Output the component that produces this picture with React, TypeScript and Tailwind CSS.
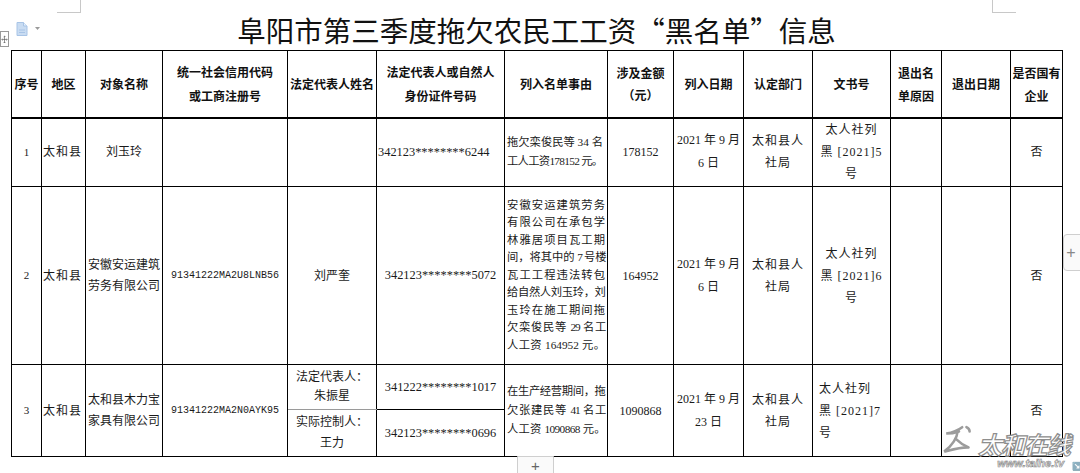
import React from "react";

const cell = "border border-black p-0 align-middle";
const body = "font-['Liberation_Serif','Noto_Sans_CJK_SC',serif] text-[12px]";

function Lines({ lines, className = "", lineClass = "" }: { lines: string[]; className?: string; lineClass?: string }) {
  return (
    <div className={className}>
      {lines.map((l, i) => (
        <div key={i} className={lineClass}>
          {l}
        </div>
      ))}
    </div>
  );
}

type RL = { t: string; c?: string; j?: boolean };

function Reason({ lines, lh = "leading-[17.5px]" }: { lines: RL[]; lh?: string }) {
  return (
    <div className={`px-[2px] text-[11.3px] ${lh}`}>
      {lines.map((l, i) => (
        <div key={i} className={`whitespace-nowrap ${l.j === false ? "" : "[text-align-last:justify]"} ${l.c ?? ""}`}>
          {l.t}
        </div>
      ))}
    </div>
  );
}

export default function App() {
  return (
    <div className="relative w-[1080px] h-[473px] overflow-hidden bg-white text-[#1a1a1a]">
      {/* page corner marks */}
      <div className="absolute left-[57px] top-0 w-[24px] h-[13px] border-r border-b border-[#c8c8c8]" />
      <div className="absolute left-[992px] top-0 w-[24px] h-[13px] border-l border-b border-[#c8c8c8]" />

      {/* move handle */}
      <div className="absolute left-0 top-[31px] w-[9px] h-[16px] border border-[#9a9a9a] bg-white flex items-center justify-center">
        <svg width="9" height="11" viewBox="0 0 9 11" fill="none" stroke="#555" strokeWidth="0.8">
          <path d="M4.5 1v9M1 5.5h7M3.3 2.2l1.2-1.2 1.2 1.2M3.3 8.8l1.2 1.2 1.2-1.2M2.2 4.3 1 5.5l1.2 1.2M6.8 4.3 8 5.5 6.8 6.7" />
        </svg>
      </div>
      {/* doc icon */}
      <svg className="absolute left-[16px] top-[22px]" width="12" height="14" viewBox="0 0 12 14">
        <path d="M1 0.5h6.5L11 4v9.5H1z" fill="#c9dcf2" stroke="#a8c4e6" />
        <path d="M7.5 0.5V4H11" fill="#e6f0fb" stroke="#a8c4e6" />
        <path d="M3 8h6M3 10.5h6" stroke="#a8c4e6" />
      </svg>
      <svg className="absolute left-[35px] top-[27px]" width="5" height="4" viewBox="0 0 5 4">
        <path d="M0 0h5L2.5 3z" fill="#9a9a9a" />
      </svg>

      {/* right tab */}
      <div className="absolute left-[1063px] top-[234px] w-[20px] h-[37px] rounded-l-[4px] border border-[#cfcfcf] bg-[#fafafa] flex items-center justify-center text-[#888] text-[16px] leading-none font-['Liberation_Sans',sans-serif] pr-[4px]">
        +
      </div>
      {/* bottom tab */}
      <div className="absolute left-[517px] top-[456px] w-[37px] h-[22px] rounded-b-[4px] border border-[#cfcfcf] bg-[#fafafa] flex items-start justify-center pt-[1px] text-[#666] text-[15px] leading-[16px] font-['Liberation_Sans',sans-serif]">
        +
      </div>

      {/* watermark */}
      <div className="absolute left-[940px] top-[424px] flex flex-col items-end">
        <div className="flex items-end">
          <svg width="38" height="34" viewBox="0 0 34 32" fill="none" stroke="#9c9c9c" strokeWidth="2.4" strokeLinecap="round">
            <path d="M20 3c-4 3-9 5-15 6 5 0 9-1 12-2M16 6c-1 8-5 14-13 20 8-2 15-4 22-4" />
            <path d="M14 14c3 3 7 6 12 8" />
            <path d="M24 3c2 1 3 2 3 4" />
          </svg>
          <span className="font-['Noto_Sans_CJK_SC',sans-serif] font-bold italic text-[24px] leading-[28px] text-white [-webkit-text-stroke:1.2px_#8e8e8e] tracking-[-1px]">
            太和在线
          </span>
        </div>
        <span className="font-['Liberation_Sans',sans-serif] font-bold italic text-[11px] leading-[11px] text-white [-webkit-text-stroke:0.7px_#8e8e8e] pr-[6px]">
          www.taihe.tv
        </span>
      </div>
      <div className="absolute left-[1072px] top-[462px] text-[8px] text-[#888] leading-none">↘</div>

      <div className="ml-[11px] w-[1051px]">
        <div className="h-[50px] pt-[15px] text-center text-[28.5px] leading-[30px] font-['Noto_Sans_CJK_SC',sans-serif] text-[#111]">
          阜阳市第三季度拖欠农民工工资“黑名单”信息
        </div>
        <table className="table-fixed border-collapse w-[1051px]">
          <colgroup>
            <col className="w-[30px]" />
            <col className="w-[44px]" />
            <col className="w-[77px]" />
            <col className="w-[125px]" />
            <col className="w-[89px]" />
            <col className="w-[128px]" />
            <col className="w-[103px]" />
            <col className="w-[66px]" />
            <col className="w-[70px]" />
            <col className="w-[69px]" />
            <col className="w-[78px]" />
            <col className="w-[51px]" />
            <col className="w-[69px]" />
            <col className="w-[52px]" />
          </colgroup>
          <thead>
            <tr className="h-[67px] font-['Noto_Sans_CJK_SC',sans-serif] font-bold text-[12px] leading-[24px] text-[#111]">
              <th className={`${cell} border-b-2`}>序号</th>
              <th className={`${cell} border-b-2`}>地区</th>
              <th className={`${cell} border-b-2`}>对象名称</th>
              <th className={`${cell} border-b-2`}>
                统一社会信用代码
                <br />
                或工商注册号
              </th>
              <th className={`${cell} border-b-2 whitespace-nowrap`}>法定代表人姓名</th>
              <th className={`${cell} border-b-2`}>
                法定代表人或自然人
                <br />
                身份证件号码
              </th>
              <th className={`${cell} border-b-2`}>列入名单事由</th>
              <th className={`${cell} border-b-2 leading-[22px]`}>
                涉及金额
                <br />
                （元）
              </th>
              <th className={`${cell} border-b-2`}>列入日期</th>
              <th className={`${cell} border-b-2`}>认定部门</th>
              <th className={`${cell} border-b-2`}>文书号</th>
              <th className={`${cell} border-b-2 leading-[23px]`}>
                退出名
                <br />
                单原因
              </th>
              <th className={`${cell} border-b-2`}>退出日期</th>
              <th className={`${cell} border-b-2 whitespace-nowrap leading-[23px]`}>
                是否国有
                <br />
                企业
              </th>
            </tr>
          </thead>
          <tbody className={body}>
            {/* Row 1 */}
            <tr className="h-[69px]">
              <td className={`${cell} text-center text-[11px]`}>1</td>
              <td className={`${cell} pl-[1px] tracking-[1px]`}>太和县</td>
              <td className={`${cell} text-center`}>刘玉玲</td>
              <td className={cell}></td>
              <td className={cell}></td>
              <td className={`${cell} pl-[1px] whitespace-nowrap text-[12.4px]`}>342123********6244</td>
              <td className={cell}>
                <Reason
                  lh="leading-[19px]"
                  lines={[
                    { t: "拖欠栾俊民等 34 名", j: false },
                    { t: "工人工资178152 元。", c: "tracking-[-0.7px]", j: false },
                  ]}
                />
              </td>
              <td className={`${cell} text-center`}>178152</td>
              <td className={`${cell} text-center`}>
                <Lines lines={["2021 年 9 月", "6 日"]} lineClass="leading-[23px] whitespace-nowrap" />
              </td>
              <td className={`${cell} text-center tracking-[1px]`}>
                <Lines lines={["太和县人", "社局"]} lineClass="leading-[22px]" />
              </td>
              <td className={`${cell} text-center`}>
                <Lines lines={["太人社列", "黑 [2021]5", "号"]} lineClass="leading-[22px] whitespace-nowrap" className="tracking-[1px]" />
              </td>
              <td className={cell}></td>
              <td className={cell}></td>
              <td className={`${cell} text-center`}>否</td>
            </tr>
            {/* Row 2 */}
            <tr className="h-[178px]">
              <td className={`${cell} text-center text-[11px]`}>2</td>
              <td className={`${cell} pl-[1px] tracking-[1px]`}>太和县</td>
              <td className={`${cell} pl-[2px]`}>
                <Lines lines={["安徽安运建筑", "劳务有限公司"]} lineClass="leading-[21px] whitespace-nowrap" />
              </td>
              <td className={`${cell} text-center font-['Liberation_Mono',monospace] text-[10px]`}>91341222MA2U8LNB56</td>
              <td className={`${cell} text-center`}>刘严奎</td>
              <td className={`${cell} text-center whitespace-nowrap text-[12.4px]`}>342123********5072</td>
              <td className={cell}>
                <Reason
                  lines={[
                    { t: "安徽安运建筑劳务" },
                    { t: "有限公司在承包学" },
                    { t: "林雅居项目瓦工期" },
                    { t: "间，将其中的 7 号楼", c: "tracking-[-1.6px]" },
                    { t: "瓦工工程违法转包" },
                    { t: "给自然人刘玉玲，刘", c: "tracking-[-0.9px]" },
                    { t: "玉玲在施工期间拖" },
                    { t: "欠栾俊民等 29 名工", c: "tracking-[-1.2px]" },
                    { t: "人工资 164952 元。" },
                  ]}
                />
              </td>
              <td className={`${cell} text-center`}>164952</td>
              <td className={`${cell} text-center`}>
                <Lines lines={["2021 年 9 月", "6 日"]} lineClass="leading-[23px] whitespace-nowrap" />
              </td>
              <td className={`${cell} text-center tracking-[1px]`}>
                <Lines lines={["太和县人", "社局"]} lineClass="leading-[22px]" />
              </td>
              <td className={`${cell} text-center`}>
                <Lines lines={["太人社列", "黑 [2021]6", "号"]} lineClass="leading-[22px] whitespace-nowrap" className="tracking-[1px]" />
              </td>
              <td className={cell}></td>
              <td className={cell}></td>
              <td className={`${cell} text-center`}>否</td>
            </tr>
            {/* Row 3 */}
            <tr className="h-[45px]">
              <td rowSpan={2} className={`${cell} text-center text-[11px]`}>3</td>
              <td rowSpan={2} className={`${cell} pl-[1px] tracking-[1px]`}>太和县</td>
              <td rowSpan={2} className={`${cell} pl-[2px]`}>
                <Lines lines={["太和县木力宝", "家具有限公司"]} lineClass="leading-[21px] whitespace-nowrap" />
              </td>
              <td rowSpan={2} className={`${cell} text-center font-['Liberation_Mono',monospace] text-[10px]`}>91341222MA2N0AYK95</td>
              <td className={`${cell} text-center border-b-[#9a9a9a] border-b-dashed`}>
                <Lines lines={["法定代表人：", "朱振星"]} lineClass="leading-[19px]" />
              </td>
              <td className={`${cell} text-center whitespace-nowrap text-[12.4px]`}>341222********1017</td>
              <td rowSpan={2} className={cell}>
                <Reason
                  lh="leading-[19px]"
                  lines={[
                    { t: "在生产经营期间，拖", c: "tracking-[-0.9px]" },
                    { t: "欠张建民等 41 名工", c: "tracking-[-1.2px]" },
                    { t: "人工资 1090868 元。", c: "tracking-[-0.6px]" },
                  ]}
                />
              </td>
              <td rowSpan={2} className={`${cell} text-center`}>1090868</td>
              <td rowSpan={2} className={`${cell} text-center`}>
                <Lines lines={["2021 年 9 月", "23 日"]} lineClass="leading-[23px] whitespace-nowrap" />
              </td>
              <td rowSpan={2} className={`${cell} text-center tracking-[1px]`}>
                <Lines lines={["太和县人", "社局"]} lineClass="leading-[22px]" />
              </td>
              <td rowSpan={2} className={`${cell} pl-[6px]`}>
                <Lines lines={["太人社列", "黑 [2021]7", "号"]} lineClass="leading-[22px] whitespace-nowrap" className="tracking-[1px]" />
              </td>
              <td rowSpan={2} className={cell}></td>
              <td rowSpan={2} className={cell}></td>
              <td rowSpan={2} className={`${cell} text-center`}>否</td>
            </tr>
            <tr className="h-[47px]">
              <td className={`${cell} text-center border-t-[#9a9a9a] border-t-dashed`}>
                <Lines lines={["实际控制人：", "王力"]} lineClass="leading-[21px]" />
              </td>
              <td className={`${cell} text-center whitespace-nowrap text-[12.4px]`}>342123********0696</td>
            </tr>
          </tbody>
        </table>
      </div>
    </div>
  );
}
